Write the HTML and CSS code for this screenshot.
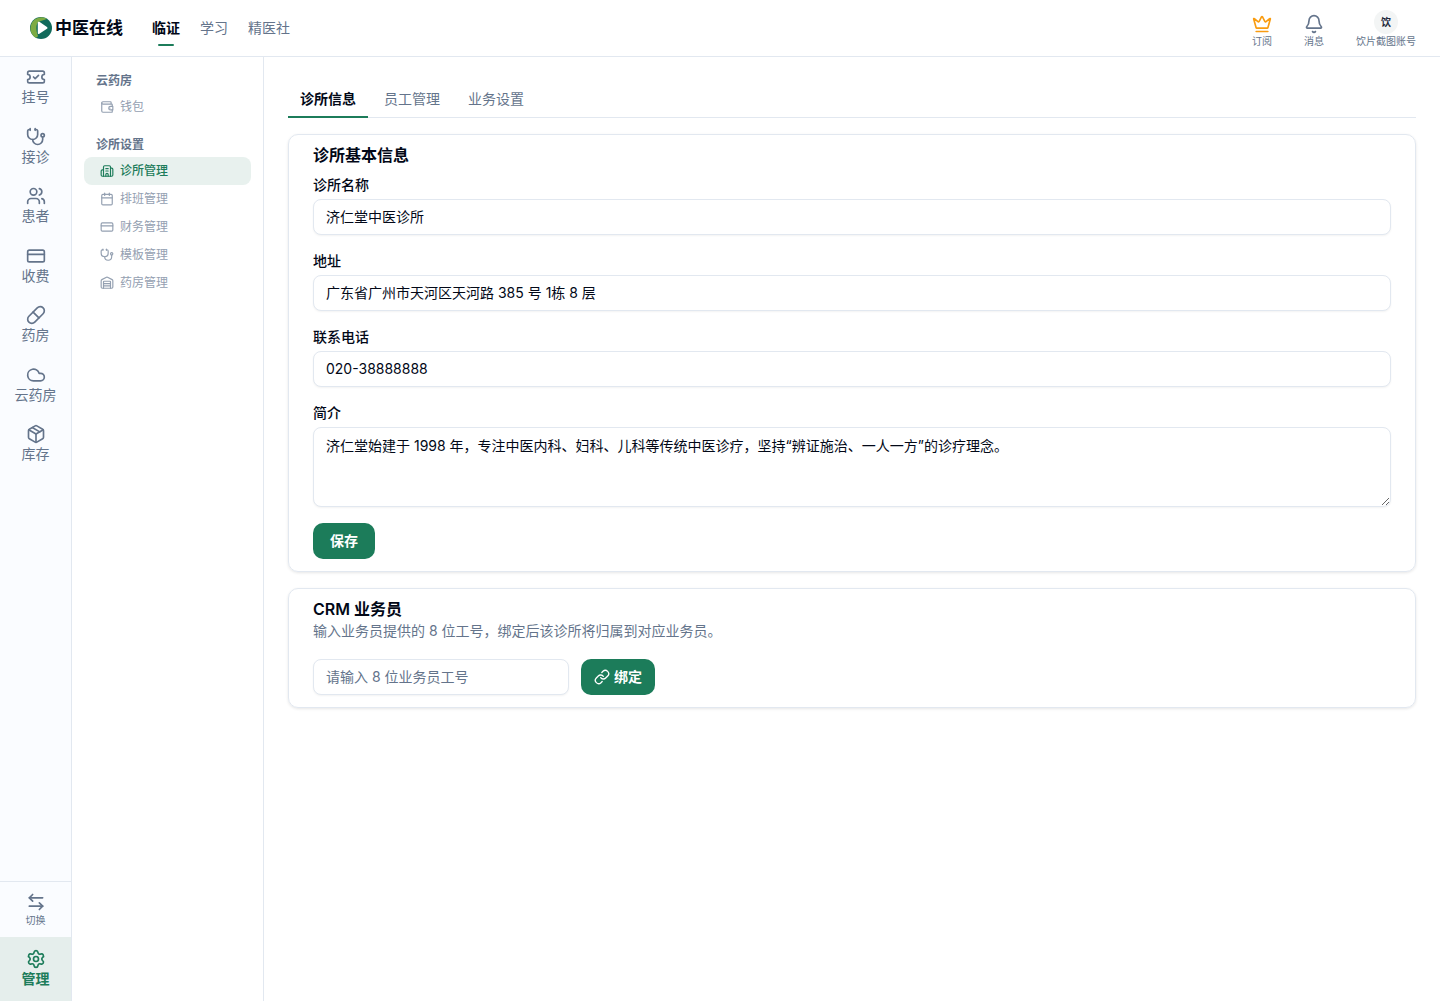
FILE: index.html
```
<!DOCTYPE html>
<html lang="zh-CN">

<head>
    <meta charset="UTF-8">
    <meta name="viewport" content="width=device-width, initial-scale=1.0">
    <title>诊所管理 - 中医在线</title>
    <link rel="stylesheet" href="styles.css">
</head>

<body>
    <header class="topbar">
        <a href="#" class="brand">
            <svg class="brand-logo" viewBox="0 0 24 24">
                <circle cx="12" cy="12" r="12" fill="#116a5b"/>
                <path d="M18.500 1.900A12 12 0 1 0 6.500 22.700C9 22 9 20.500 8 18.500C6.500 14 6.500 9 8.500 6C11.500 3.500 15.500 4 18.500 1.900z" fill="#7cab43"/>
                <path d="M8.500 6.200c0-.9.9-1.400 1.700-.9l8.300 5.500c.8.500.8 1.500 0 2l-8.300 5.500c-.8.500-1.700 0-1.700-.9z" fill="#fff"/>
            </svg>
            <span>中医在线</span>
        </a>
        <nav class="topnav">
            <a href="#" class="active">临证</a>
            <a href="#">学习</a>
            <a href="#">精医社</a>
        </nav>
        <div class="top-actions">
            <a href="#" class="top-action">
                <svg class="icon icon-crown"><use href="#crown"/></svg>
                <span>订阅</span>
            </a>
            <button type="button" class="top-action">
                <svg class="icon"><use href="#bell"/></svg>
                <span>消息</span>
            </button>
            <button type="button" class="top-action">
                <span class="avatar">饮</span>
                <span>饮片截图账号</span>
            </button>
        </div>
    </header>

    <div class="layout">
        <aside class="rail">
            <nav class="rail-nav">
                <a href="#" class="rail-item"><svg class="icon"><use href="#ticket-check"/></svg>挂号</a>
                <a href="#" class="rail-item"><svg class="icon"><use href="#stethoscope"/></svg>接诊</a>
                <a href="#" class="rail-item"><svg class="icon"><use href="#users"/></svg>患者</a>
                <a href="#" class="rail-item"><svg class="icon"><use href="#credit-card"/></svg>收费</a>
                <a href="#" class="rail-item"><svg class="icon"><use href="#pill"/></svg>药房</a>
                <a href="#" class="rail-item"><svg class="icon"><use href="#cloud"/></svg>云药房</a>
                <a href="#" class="rail-item"><svg class="icon"><use href="#package"/></svg>库存</a>
            </nav>
            <button type="button" class="rail-switch"><svg class="icon"><use href="#arrow-left-right"/></svg>切换</button>
            <a href="#" class="rail-item rail-manage"><svg class="icon"><use href="#settings"/></svg>管理</a>
        </aside>

        <aside class="sidebar">
            <section class="side-group">
                <h2>云药房</h2>
                <a href="#" class="side-item"><svg class="icon"><use href="#wallet"/></svg>钱包</a>
            </section>
            <section class="side-group">
                <h2>诊所设置</h2>
                <a href="#" class="side-item active"><svg class="icon"><use href="#building"/></svg>诊所管理</a>
                <a href="#" class="side-item"><svg class="icon"><use href="#calendar"/></svg>排班管理</a>
                <a href="#" class="side-item"><svg class="icon"><use href="#credit-card"/></svg>财务管理</a>
                <a href="#" class="side-item"><svg class="icon"><use href="#stethoscope"/></svg>模板管理</a>
                <a href="#" class="side-item"><svg class="icon"><use href="#warehouse"/></svg>药房管理</a>
            </section>
        </aside>

        <main class="content">
            <div class="tabs" role="tablist">
                <button type="button" role="tab" aria-selected="true" class="tab active">诊所信息</button>
                <button type="button" role="tab" aria-selected="false" class="tab">员工管理</button>
                <button type="button" role="tab" aria-selected="false" class="tab">业务设置</button>
            </div>

            <form class="card">
                <h3>诊所基本信息</h3>
                <div class="field">
                    <label for="clinicName">诊所名称</label>
                    <input type="text" id="clinicName" value="济仁堂中医诊所">
                </div>
                <div class="field">
                    <label for="clinicAddress">地址</label>
                    <input type="text" id="clinicAddress" value="广东省广州市天河区天河路 385 号 1栋 8 层">
                </div>
                <div class="field">
                    <label for="clinicPhone">联系电话</label>
                    <input type="tel" id="clinicPhone" value="020-38888888">
                </div>
                <div class="field">
                    <label for="clinicIntro">简介</label>
                    <textarea id="clinicIntro">济仁堂始建于 1998 年，专注中医内科、妇科、儿科等传统中医诊疗，坚持“辨证施治、一人一方”的诊疗理念。</textarea>
                </div>
                <button type="submit" class="btn btn-save">保存</button>
            </form>

            <form class="card">
                <h3>CRM 业务员</h3>
                <p class="card-desc">输入业务员提供的 8 位工号，绑定后该诊所将归属到对应业务员。</p>
                <div class="bind-row">
                    <input type="text" id="salesCode" aria-label="业务员工号" placeholder="请输入 8 位业务员工号">
                    <button type="submit" class="btn"><svg class="icon"><use href="#link"/></svg>绑定</button>
                </div>
            </form>
        </main>
    </div>

    <svg xmlns="http://www.w3.org/2000/svg" style="display: none;">

    <symbol id="crown" viewBox="0 0 24 24">
      <path d="M11.562 3.266a.5.5 0 0 1 .876 0L15.390 8.870a1 1 0 0 0 1.516.294L21.183 5.500a.5.5 0 0 1 .798.519l-2.834 10.246a1 1 0 0 1-.956.734H5.810a1 1 0 0 1-.957-.734L2.020 6.020a.5.5 0 0 1 .798-.519l4.276 3.664a1 1 0 0 0 1.516-.294z"/>
      <path d="M5 21h14"/>
    </symbol>

    <symbol id="bell" viewBox="0 0 24 24">
      <path d="M10.268 21a2 2 0 0 0 3.464 0"/>
      <path d="M3.262 15.326A1 1 0 0 0 4 17h16a1 1 0 0 0 .740-1.673C19.410 13.956 18 12.499 18 8A6 6 0 0 0 6 8c0 4.499-1.411 5.956-2.738 7.326"/>
    </symbol>

    <symbol id="ticket-check" viewBox="0 0 24 24">
      <path d="M2 9a3 3 0 0 1 0 6v2a2 2 0 0 0 2 2h16a2 2 0 0 0 2-2v-2a3 3 0 0 1 0-6V7a2 2 0 0 0-2-2H4a2 2 0 0 0-2 2Z"/>
      <path d="m9 12 2 2 4-4"/>
    </symbol>

    <symbol id="stethoscope" viewBox="0 0 24 24">
      <path d="M11 2v2"/>
      <path d="M5 2v2"/>
      <path d="M5 3H4a2 2 0 0 0-2 2v4a6 6 0 0 0 12 0V5a2 2 0 0 0-2-2h-1"/>
      <path d="M8 15a6 6 0 0 0 12 0v-3"/>
      <circle cx="20" cy="10" r="2"/>
    </symbol>

    <symbol id="users" viewBox="0 0 24 24">
      <path d="M16 21v-2a4 4 0 0 0-4-4H6a4 4 0 0 0-4 4v2"/>
      <path d="M16 3.128a4 4 0 0 1 0 7.744"/>
      <path d="M22 21v-2a4 4 0 0 0-3-3.870"/>
      <circle cx="9" cy="7" r="4"/>
    </symbol>

    <symbol id="credit-card" viewBox="0 0 24 24">
      <rect width="20" height="14" x="2" y="5" rx="2"/>
      <path d="M2 10h20"/>
    </symbol>

    <symbol id="pill" viewBox="0 0 24 24">
      <path d="m10.500 20.500 10-10a4.950 4.950 0 1 0-7-7l-10 10a4.950 4.950 0 1 0 7 7Z"/>
      <path d="m8.500 8.500 7 7"/>
    </symbol>

    <symbol id="cloud" viewBox="0 0 24 24">
      <path d="M17.500 19H9a7 7 0 1 1 6.710-9h1.790a4.500 4.500 0 1 1 0 9Z"/>
    </symbol>

    <symbol id="package" viewBox="0 0 24 24">
      <path d="M11 21.730a2 2 0 0 0 2 0l7-4A2 2 0 0 0 21 16V8a2 2 0 0 0-1-1.730l-7-4a2 2 0 0 0-2 0l-7 4A2 2 0 0 0 3 8v8a2 2 0 0 0 1 1.730z"/>
      <path d="M12 22V12"/>
      <path d="M3.290 7 12 12l8.710-5"/>
      <path d="m7.500 4.270 9 5.150"/>
    </symbol>

    <symbol id="arrow-left-right" viewBox="0 0 24 24">
      <path d="M8 3 4 7l4 4"/>
      <path d="M4 7h16"/>
      <path d="m16 21 4-4-4-4"/>
      <path d="M20 17H4"/>
    </symbol>

    <symbol id="settings" viewBox="0 0 24 24">
      <path d="M9.671 4.136a2.340 2.340 0 0 1 4.659 0 2.340 2.340 0 0 0 3.319 1.915 2.340 2.340 0 0 1 2.330 4.033 2.340 2.340 0 0 0 0 3.831 2.340 2.340 0 0 1-2.330 4.033 2.340 2.340 0 0 0-3.319 1.915 2.340 2.340 0 0 1-4.659 0 2.340 2.340 0 0 0-3.320-1.915 2.340 2.340 0 0 1-2.330-4.033 2.340 2.340 0 0 0 0-3.831A2.340 2.340 0 0 1 6.350 6.051a2.340 2.340 0 0 0 3.319-1.915"/>
      <circle cx="12" cy="12" r="3"/>
    </symbol>

    <symbol id="wallet" viewBox="0 0 24 24">
      <path d="M17 14h.010"/>
      <path d="M19 7V4a1 1 0 0 0-1-1H5a2 2 0 0 0 0 4h15a1 1 0 0 1 1 1v3"/>
      <path d="M3 5v14a2 2 0 0 0 2 2h15a1 1 0 0 0 1-1v-3"/>
      <path d="M22 11h-4a3 3 0 0 0 0 6h4z"/>
    </symbol>

    <symbol id="building" viewBox="0 0 24 24">
      <path d="M10 12h4"/>
      <path d="M10 8h4"/>
      <path d="M14 21v-3a2 2 0 0 0-4 0v3"/>
      <path d="M6 10H4a2 2 0 0 0-2 2v7a2 2 0 0 0 2 2h16a2 2 0 0 0 2-2V9a2 2 0 0 0-2-2h-2"/>
      <path d="M6 21V5a2 2 0 0 1 2-2h8a2 2 0 0 1 2 2v16"/>
    </symbol>

    <symbol id="calendar" viewBox="0 0 24 24">
      <path d="M8 2v4"/>
      <path d="M16 2v4"/>
      <rect width="18" height="18" x="3" y="4" rx="2"/>
      <path d="M3 10h18"/>
    </symbol>

    <symbol id="warehouse" viewBox="0 0 24 24">
      <path d="M18 21V10a1 1 0 0 0-1-1H7a1 1 0 0 0-1 1v11"/>
      <path d="M22 19a2 2 0 0 1-2 2H4a2 2 0 0 1-2-2V8a2 2 0 0 1 1.132-1.803l7.950-3.974a2 2 0 0 1 1.837 0l7.948 3.974A2 2 0 0 1 22 8z"/>
      <path d="M6 13h12"/>
      <path d="M6 17h12"/>
    </symbol>

    <symbol id="link" viewBox="0 0 24 24">
      <path d="M10 13a5 5 0 0 0 7.540.540l3-3a5 5 0 0 0-7.070-7.070l-1.720 1.710"/>
      <path d="M14 11a5 5 0 0 0-7.540-.540l-3 3a5 5 0 0 0 7.070 7.070l1.710-1.710"/>
    </symbol>

    </svg>
</body>

</html>
```
FILE: styles.css
```
* {
    box-sizing: border-box;
}

body {
    margin: 0;
    min-height: 100vh;
    display: flex;
    flex-direction: column;
    background: #fff;
    color: #020817;
    font-family: Inter, 'Noto Sans CJK SC', sans-serif;
    font-size: 14px;
    line-height: 20px;
}

a {
    color: inherit;
    text-decoration: none;
}

button,
input,
textarea {
    font: inherit;
    color: inherit;
}

button {
    margin: 0;
    padding: 0;
    border: none;
    background: transparent;
    cursor: pointer;
}

h2,
h3,
p {
    margin: 0;
}

.icon {
    width: 20px;
    height: 20px;
    flex-shrink: 0;
    fill: none;
    stroke: currentColor;
    stroke-width: 2;
    stroke-linecap: round;
    stroke-linejoin: round;
}

/* top bar */
.topbar {
    display: flex;
    align-items: center;
    height: 57px;
    padding: 0 24px 0 30px;
    border-bottom: 1px solid #e2e8f0;
}

.brand {
    display: flex;
    align-items: center;
    gap: 3px;
    font-size: 17px;
    font-weight: 600;
}

.brand-logo {
    width: 22px;
    height: 22px;
}

.topnav {
    display: flex;
    gap: 20px;
    margin-left: 29px;
    color: #64748b;
}

.topnav a {
    position: relative;
}

.topnav .active {
    color: #020817;
    font-weight: 600;
}

.topnav .active::after {
    content: '';
    position: absolute;
    left: 50%;
    bottom: -8px;
    width: 16px;
    height: 2px;
    margin-left: -8px;
    border-radius: 1px;
    background: #1c7c5a;
}

.top-actions {
    display: flex;
    align-items: flex-end;
    gap: 32px;
    margin-left: auto;
    padding-top: 2px;
}

.top-action {
    display: flex;
    flex-direction: column;
    align-items: center;
    color: #64748b;
    font-size: 10px;
    line-height: 14px;
}

.icon-crown {
    color: #f99c11;
}

.avatar {
    width: 24px;
    height: 24px;
    border-radius: 50%;
    background: #f3f5f5;
    color: #1e293b;
    font-weight: 600;
    line-height: 24px;
    text-align: center;
}

.layout {
    flex: 1;
    display: flex;
}

/* icon rail */
.rail {
    width: 72px;
    flex-shrink: 0;
    display: flex;
    flex-direction: column;
    border-right: 1px solid #e2e8f0;
    background: #fafcff;
    color: #64748b;
}

.rail-nav {
    flex: 1;
}

.rail-item {
    display: flex;
    flex-direction: column;
    align-items: center;
    gap: 1px;
    padding: 10px 0 11px;
    line-height: 1.25;
}

.rail-switch {
    display: flex;
    flex-direction: column;
    align-items: center;
    justify-content: center;
    gap: 1px;
    height: 56px;
    border-top: 1px solid #e2e8f0;
    font-size: 10px;
    line-height: 14px;
}

.rail-manage {
    justify-content: center;
    height: 64px;
    background: #e5eeec;
    color: #1c7c5a;
    font-weight: 600;
}

/* secondary menu */
.sidebar {
    width: 192px;
    flex-shrink: 0;
    padding: 16px 12px;
    border-right: 1px solid #e2e8f0;
}

.side-group + .side-group {
    margin-top: 16px;
}

.side-group h2 {
    margin-bottom: 4px;
    padding: 0 12px;
    color: #64748b;
    font-size: 12px;
    font-weight: 600;
    line-height: 16px;
}

.side-item {
    display: flex;
    align-items: center;
    gap: 6px;
    height: 28px;
    padding: 0 16px;
    border-radius: 8px;
    color: #94a0b1;
    font-size: 12px;
}

.side-item .icon {
    width: 14px;
    height: 14px;
}

.side-item.active {
    background: #e8f1ee;
    color: #1c7c5a;
    font-weight: 500;
}

/* page content */
.content {
    flex: 1;
    min-width: 0;
    padding: 24px;
}

.tabs {
    display: flex;
    gap: 4px;
    margin-bottom: 16px;
    border-bottom: 1px solid #e2e8f0;
}

.tab {
    height: 37px;
    margin-bottom: -1px;
    padding: 0 12px;
    border-bottom: 2px solid transparent;
    color: #64748b;
}

.tab.active {
    border-color: #1c7c5a;
    color: #020817;
    font-weight: 600;
}

.card {
    padding: 8px 24px 12px;
    border: 1px solid #e2e8f0;
    border-radius: 10px;
    box-shadow: 0 1px 3px rgba(0, 0, 0, .1);
}

.card + .card {
    margin-top: 16px;
}

.card h3 {
    font-size: 16px;
    font-weight: 600;
    line-height: 24px;
}

.card-desc {
    color: #64748b;
}

.field {
    display: flex;
    flex-direction: column;
    gap: 4px;
    margin: 8px 0 16px;
}

.field + .field {
    margin-top: 0;
}

.field label {
    font-weight: 500;
}

.card input,
.card textarea {
    width: 100%;
    height: 36px;
    margin: 0;
    padding: 0 12px 2px;
    border: 1px solid #e2e8f0;
    border-radius: 8px;
    outline: none;
    background: #fff;
    box-shadow: 0 1px 2px rgba(0, 0, 0, .05);
}

.card textarea {
    height: 80px;
    padding: 8px 12px;
    resize: vertical;
}

.card input::placeholder {
    color: #64748b;
}

.card .bind-row input {
    width: 256px;
}

.btn {
    display: flex;
    align-items: center;
    gap: 4px;
    height: 36px;
    padding: 0 13px;
    border-radius: 10px;
    background: #1c7c5a;
    color: #fff;
    font-weight: 600;
}

.btn .icon {
    width: 16px;
    height: 16px;
}

.btn-save {
    padding: 0 17px;
}

.bind-row {
    display: flex;
    gap: 12px;
    margin-top: 18px;
}
```
